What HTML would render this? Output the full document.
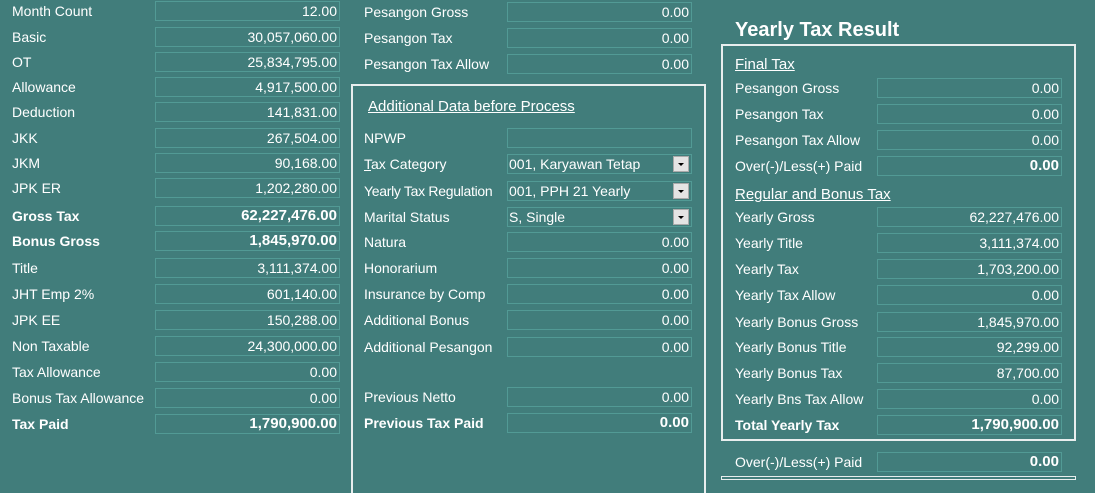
<!DOCTYPE html><html style="height:493px;overflow:hidden"><head><style>
body{margin:0;width:1095px;height:493px;background:#417d7b;font-family:"Liberation Sans",sans-serif;font-size:14px;color:#fff;position:relative;overflow:hidden}
.l{position:absolute;white-space:nowrap;line-height:18px}
.f{position:absolute;height:18px;border:1px solid #529a95;text-align:right;padding-right:2px;box-sizing:content-box;line-height:18px;white-space:nowrap}
.b{font-weight:bold}
.f.b{font-size:15px}
.u{text-decoration:underline}
.box{position:absolute;border:2px solid #e8eeee;box-sizing:border-box}
.dd{text-align:left;padding-left:1px;padding-right:0}
.ar{position:absolute;right:2px;top:1px;width:16px;height:16px;background:#e4e4e4;border:1px solid #aaa;box-sizing:border-box}
.ar:after{content:"";position:absolute;left:4px;top:6px;border-left:3px solid transparent;border-right:3px solid transparent;border-top:3px solid #000}
</style></head><body>
<div class="l" style="left:12px;top:2px">Month Count</div><div class="f" style="left:155px;top:1px;width:181px">12.00</div>
<div class="l" style="left:12px;top:28px">Basic</div><div class="f" style="left:155px;top:27px;width:181px">30,057,060.00</div>
<div class="l" style="left:12px;top:53px">OT</div><div class="f" style="left:155px;top:52px;width:181px">25,834,795.00</div>
<div class="l" style="left:12px;top:78px">Allowance</div><div class="f" style="left:155px;top:77px;width:181px">4,917,500.00</div>
<div class="l" style="left:12px;top:103px">Deduction</div><div class="f" style="left:155px;top:102px;width:181px">141,831.00</div>
<div class="l" style="left:12px;top:129px">JKK</div><div class="f" style="left:155px;top:128px;width:181px">267,504.00</div>
<div class="l" style="left:12px;top:154px">JKM</div><div class="f" style="left:155px;top:153px;width:181px">90,168.00</div>
<div class="l" style="left:12px;top:179px">JPK ER</div><div class="f" style="left:155px;top:178px;width:181px">1,202,280.00</div>
<div class="l b" style="left:12px;top:207px">Gross Tax</div><div class="f b" style="left:155px;top:206px;width:181px">62,227,476.00</div>
<div class="l b" style="left:12px;top:232px">Bonus Gross</div><div class="f b" style="left:155px;top:231px;width:181px">1,845,970.00</div>
<div class="l" style="left:12px;top:259px">Title</div><div class="f" style="left:155px;top:258px;width:181px">3,111,374.00</div>
<div class="l" style="left:12px;top:285px">JHT Emp 2%</div><div class="f" style="left:155px;top:284px;width:181px">601,140.00</div>
<div class="l" style="left:12px;top:311px">JPK EE</div><div class="f" style="left:155px;top:310px;width:181px">150,288.00</div>
<div class="l" style="left:12px;top:337px">Non Taxable</div><div class="f" style="left:155px;top:336px;width:181px">24,300,000.00</div>
<div class="l" style="left:12px;top:363px">Tax Allowance</div><div class="f" style="left:155px;top:362px;width:181px">0.00</div>
<div class="l" style="left:12px;top:389px">Bonus Tax Allowance</div><div class="f" style="left:155px;top:388px;width:181px">0.00</div>
<div class="l b" style="left:12px;top:415px">Tax Paid</div><div class="f b" style="left:155px;top:414px;width:181px">1,790,900.00</div>
<div class="l" style="left:364px;top:3px">Pesangon Gross</div><div class="f" style="left:507px;top:2px;width:181px">0.00</div>
<div class="l" style="left:364px;top:29px">Pesangon Tax</div><div class="f" style="left:507px;top:28px;width:181px">0.00</div>
<div class="l" style="left:364px;top:55px">Pesangon Tax Allow</div><div class="f" style="left:507px;top:54px;width:181px">0.00</div>
<div class="box" style="left:351px;top:84px;width:355px;height:420px"></div>
<div class="l u" style="left:368px;top:98px;font-size:15px">Additional Data before Process</div>
<div class="l" style="left:364px;top:129px">NPWP</div><div class="f" style="left:507px;top:128px;width:181px"></div>
<div class="l" style="left:364px;top:155px"><span class="u">T</span>ax Category</div><div class="f dd" style="left:507px;top:154px;width:182px">001, Karyawan Tetap<div class="ar"></div></div>
<div class="l" style="left:364px;top:182px;letter-spacing:-0.3px">Yearly Tax Regulation</div><div class="f dd" style="left:507px;top:181px;width:182px">001, PPH 21 Yearly<div class="ar"></div></div>
<div class="l" style="left:364px;top:208px">Marital Status</div><div class="f dd" style="left:507px;top:207px;width:182px">S, Single<div class="ar"></div></div>
<div class="l" style="left:364px;top:233px">Natura</div><div class="f" style="left:507px;top:232px;width:181px">0.00</div>
<div class="l" style="left:364px;top:259px">Honorarium</div><div class="f" style="left:507px;top:258px;width:181px">0.00</div>
<div class="l" style="left:364px;top:285px">Insurance by Comp</div><div class="f" style="left:507px;top:284px;width:181px">0.00</div>
<div class="l" style="left:364px;top:311px">Additional Bonus</div><div class="f" style="left:507px;top:310px;width:181px">0.00</div>
<div class="l" style="left:364px;top:338px">Additional Pesangon</div><div class="f" style="left:507px;top:337px;width:181px">0.00</div>
<div class="l" style="left:364px;top:388px">Previous Netto</div><div class="f" style="left:507px;top:387px;width:181px">0.00</div>
<div class="l b" style="left:364px;top:414px">Previous Tax Paid</div><div class="f b" style="left:507px;top:413px;width:181px">0.00</div>
<div class="l b" style="left:735px;top:19px;font-size:20px;line-height:22px">Yearly Tax Result</div>
<div class="box" style="left:721px;top:44px;width:355px;height:397px"></div>
<div class="l u" style="left:735px;top:56px;font-size:15px">Final Tax</div>
<div class="l" style="left:735px;top:79px">Pesangon Gross</div><div class="f" style="left:877px;top:78px;width:181px">0.00</div>
<div class="l" style="left:735px;top:105px">Pesangon Tax</div><div class="f" style="left:877px;top:104px;width:181px">0.00</div>
<div class="l" style="left:735px;top:131px">Pesangon Tax Allow</div><div class="f" style="left:877px;top:130px;width:181px">0.00</div>
<div class="l" style="left:735px;top:157px">Over(-)/Less(+) Paid</div><div class="f b" style="left:877px;top:156px;width:181px">0.00</div>
<div class="l u" style="left:735px;top:186px;font-size:15px">Regular and Bonus Tax</div>
<div class="l" style="left:735px;top:208px">Yearly Gross</div><div class="f" style="left:877px;top:207px;width:181px">62,227,476.00</div>
<div class="l" style="left:735px;top:234px">Yearly Title</div><div class="f" style="left:877px;top:233px;width:181px">3,111,374.00</div>
<div class="l" style="left:735px;top:260px">Yearly Tax</div><div class="f" style="left:877px;top:259px;width:181px">1,703,200.00</div>
<div class="l" style="left:735px;top:286px">Yearly Tax Allow</div><div class="f" style="left:877px;top:285px;width:181px">0.00</div>
<div class="l" style="left:735px;top:313px">Yearly Bonus Gross</div><div class="f" style="left:877px;top:312px;width:181px">1,845,970.00</div>
<div class="l" style="left:735px;top:338px">Yearly Bonus Title</div><div class="f" style="left:877px;top:337px;width:181px">92,299.00</div>
<div class="l" style="left:735px;top:364px">Yearly Bonus Tax</div><div class="f" style="left:877px;top:363px;width:181px">87,700.00</div>
<div class="l" style="left:735px;top:390px">Yearly Bns Tax Allow</div><div class="f" style="left:877px;top:389px;width:181px">0.00</div>
<div class="l b" style="left:735px;top:416px">Total Yearly Tax</div><div class="f b" style="left:877px;top:415px;width:181px">1,790,900.00</div>
<div class="l" style="left:735px;top:453px">Over(-)/Less(+) Paid</div><div class="f b" style="left:877px;top:452px;width:181px">0.00</div>
<div style="position:absolute;left:721px;top:476px;width:355px;height:4px;border:1px solid #e8eeee;box-sizing:border-box"></div>
</body></html>
